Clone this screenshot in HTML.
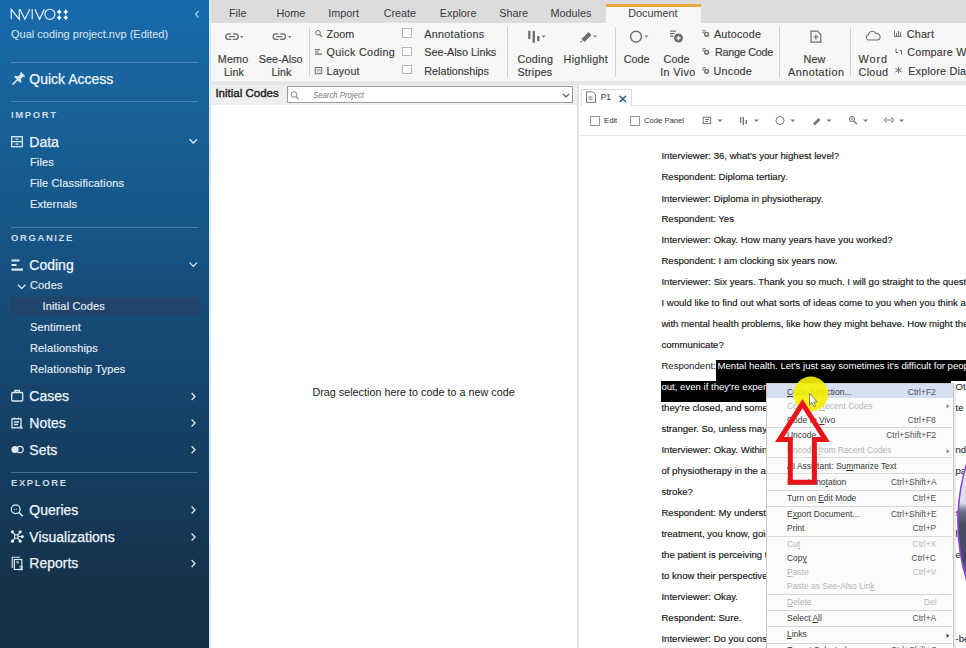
<!DOCTYPE html>
<html><head><meta charset="utf-8"><style>
html,body{margin:0;padding:0;width:966px;height:648px;overflow:hidden;background:#fff;position:relative}
.t{position:absolute;white-space:nowrap;line-height:1;font-family:"Liberation Sans", sans-serif}
u{text-decoration:underline;text-underline-offset:1px}
svg{overflow:visible}
</style></head><body>
<div style="position:absolute;left:0px;top:0px;width:209px;height:648px;background:linear-gradient(to bottom,#176aab 0px,#1867a4 45px,#165c90 165px,#174a75 325px,#143b5c 485px,#152f45 625px,#142d42 648px)"></div>
<div style="position:absolute;left:208.5px;top:0px;width:2px;height:648px;background:#d9ebfa"></div>
<svg style="position:absolute;left:0;top:0" width="209" height="60" viewBox="0 0 209 60">
<g fill="none" stroke="#eef5fb" stroke-width="1.15" stroke-linejoin="miter">
<path d="M11.2 19.3 V9.3 L19.3 19.3 V9.3"/>
<path d="M19.9 9.3 L24.9 19.3 L29.9 9.3"/>
<path d="M32.2 9.3 V19.3"/>
<path d="M34.9 9.3 L39.6 19.3 L44.3 9.3"/>
<ellipse cx="49.9" cy="14.3" rx="5.0" ry="5.1"/>
</g>
<g fill="#f4f8fc"><path d="M59.2 8.9 Q60.08 10.79 61.7 11.8 Q60.08 12.82 59.2 14.700000000000001 Q58.33 12.82 56.7 11.8 Q58.33 10.79 59.2 8.9 Z"/><path d="M65.8 8.9 Q66.67 10.79 68.3 11.8 Q66.67 12.82 65.8 14.700000000000001 Q64.92 12.82 63.3 11.8 Q64.92 10.79 65.8 8.9 Z"/><path d="M59.2 14.700000000000001 Q60.08 16.59 61.7 17.6 Q60.08 18.62 59.2 20.5 Q58.33 18.62 56.7 17.6 Q58.33 16.59 59.2 14.700000000000001 Z"/><path d="M65.8 14.700000000000001 Q66.67 16.59 68.3 17.6 Q66.67 18.62 65.8 20.5 Q64.92 18.62 63.3 17.6 Q64.92 16.59 65.8 14.700000000000001 Z"/></g>
<path d="M198.6 11 L195.6 14.3 L198.6 17.6" fill="none" stroke="#9ccff2" stroke-width="1.3"/>
</svg>
<div class="t" style="left:11.00px;top:28.69px;font-size:11px;color:#dbe8f3;font-weight:400;font-style:normal;">Qual coding project.nvp (Edited)</div>
<div style="position:absolute;left:11px;top:62px;width:187px;height:1px;background:rgba(160,200,235,0.35)"></div>
<div style="position:absolute;left:11px;top:101px;width:187px;height:1px;background:rgba(160,200,235,0.35)"></div>
<div style="position:absolute;left:11px;top:227px;width:187px;height:1px;background:rgba(160,200,235,0.35)"></div>
<div style="position:absolute;left:11px;top:472px;width:187px;height:1px;background:rgba(160,200,235,0.35)"></div>
<div class="t" style="left:11.00px;top:109.96px;font-size:9.5px;color:#cfdcea;font-weight:700;font-style:normal;letter-spacing:1.6px;">IMPORT</div>
<div class="t" style="left:11.00px;top:232.96px;font-size:9.5px;color:#cfdcea;font-weight:700;font-style:normal;letter-spacing:1.6px;">ORGANIZE</div>
<div class="t" style="left:11.00px;top:478.16px;font-size:9.5px;color:#cfdcea;font-weight:700;font-style:normal;letter-spacing:1.6px;">EXPLORE</div>
<div class="t" style="left:29.30px;top:72.15px;font-size:14px;color:#eef4fa;font-weight:400;font-style:normal;-webkit-text-stroke:0.25px #eef4fa;">Quick Access</div>
<div class="t" style="left:29.30px;top:134.65px;font-size:14px;color:#eef4fa;font-weight:400;font-style:normal;-webkit-text-stroke:0.25px #eef4fa;">Data</div>
<div class="t" style="left:29.30px;top:258.15px;font-size:14px;color:#eef4fa;font-weight:400;font-style:normal;-webkit-text-stroke:0.25px #eef4fa;">Coding</div>
<div class="t" style="left:29.30px;top:389.15px;font-size:14px;color:#eef4fa;font-weight:400;font-style:normal;-webkit-text-stroke:0.25px #eef4fa;">Cases</div>
<div class="t" style="left:29.30px;top:415.65px;font-size:14px;color:#eef4fa;font-weight:400;font-style:normal;-webkit-text-stroke:0.25px #eef4fa;">Notes</div>
<div class="t" style="left:29.30px;top:442.55px;font-size:14px;color:#eef4fa;font-weight:400;font-style:normal;-webkit-text-stroke:0.25px #eef4fa;">Sets</div>
<div class="t" style="left:29.30px;top:502.95px;font-size:14px;color:#eef4fa;font-weight:400;font-style:normal;-webkit-text-stroke:0.25px #eef4fa;">Queries</div>
<div class="t" style="left:29.30px;top:529.95px;font-size:14px;color:#eef4fa;font-weight:400;font-style:normal;-webkit-text-stroke:0.25px #eef4fa;">Visualizations</div>
<div class="t" style="left:29.30px;top:556.15px;font-size:14px;color:#eef4fa;font-weight:400;font-style:normal;-webkit-text-stroke:0.25px #eef4fa;">Reports</div>
<div style="position:absolute;left:10px;top:297px;width:190px;height:19px;background:#21446b"></div>
<div class="t" style="left:30.00px;top:156.89px;font-size:11px;color:#e6eef6;font-weight:400;font-style:normal;letter-spacing:0.15px;-webkit-text-stroke:0.15px #e6eef6;">Files</div>
<div class="t" style="left:30.00px;top:178.19px;font-size:11px;color:#e6eef6;font-weight:400;font-style:normal;letter-spacing:0.15px;-webkit-text-stroke:0.15px #e6eef6;">File Classifications</div>
<div class="t" style="left:30.00px;top:198.99px;font-size:11px;color:#e6eef6;font-weight:400;font-style:normal;letter-spacing:0.15px;-webkit-text-stroke:0.15px #e6eef6;">Externals</div>
<div class="t" style="left:30.00px;top:280.39px;font-size:11px;color:#e6eef6;font-weight:400;font-style:normal;letter-spacing:0.15px;-webkit-text-stroke:0.15px #e6eef6;">Codes</div>
<div class="t" style="left:42.50px;top:301.19px;font-size:11px;color:#e6eef6;font-weight:400;font-style:normal;letter-spacing:0.15px;-webkit-text-stroke:0.15px #e6eef6;">Initial Codes</div>
<div class="t" style="left:30.00px;top:322.49px;font-size:11px;color:#e6eef6;font-weight:400;font-style:normal;letter-spacing:0.15px;-webkit-text-stroke:0.15px #e6eef6;">Sentiment</div>
<div class="t" style="left:30.00px;top:343.49px;font-size:11px;color:#e6eef6;font-weight:400;font-style:normal;letter-spacing:0.15px;-webkit-text-stroke:0.15px #e6eef6;">Relationships</div>
<div class="t" style="left:30.00px;top:364.49px;font-size:11px;color:#e6eef6;font-weight:400;font-style:normal;letter-spacing:0.15px;-webkit-text-stroke:0.15px #e6eef6;">Relationship Types</div>
<svg style="position:absolute;left:0;top:0" width="209" height="648" viewBox="0 0 209 648">
<g fill="none" stroke="#dce8f3" stroke-width="1.3">
<!-- data icon -->
<rect x="11.7" y="136.7" width="10.6" height="10" />
<path d="M11.7 141.7 H22.3 M15.5 139.2 h3 M15.5 144.2 h3"/>
<!-- chevrons down -->
<path d="M189.6 139.2 L193.3 143 L197 139.2" />
<path d="M189.6 262.6 L193.3 266.4 L197 262.6" />
<path d="M18 284.8 L21.7 288.6 L25.4 284.8" />
<!-- chevrons right -->
<path d="M191.6 393 L195 396.5 L191.6 400" />
<path d="M191.6 419.5 L195 423 L191.6 426.5" />
<path d="M191.6 446.3 L195 449.8 L191.6 453.3" />
<path d="M191.6 506.5 L195 510 L191.6 513.5" />
<path d="M191.6 533.5 L195 537 L191.6 540.5" />
<path d="M191.6 560 L195 563.5 L191.6 567" />
<!-- cases -->
<rect x="11.7" y="392.5" width="11" height="8.5" rx="1"/>
<path d="M15 392.5 v-2 h4.4 v2"/>
<!-- notes -->
<rect x="12" y="418.8" width="9" height="9"/>
<path d="M14 422 h5 M14 424.5 h4 M14.5 417.5 v2 M18.5 417.5 v2 M20 426 l2.5 2.5"/>
<!-- queries -->
<circle cx="15.7" cy="509.3" r="4.4"/>
<path d="M18.9 512.5 L22.7 516.2" stroke-width="1.6"/>
<path d="M13.9 509.3 h3.6" stroke-width="1" stroke-dasharray="1 0.8"/>
<!-- reports -->
<path d="M12.2 568 V557.2 H20" stroke-width="1.1"/>
<rect x="14.3" y="559.5" width="7.5" height="10" stroke-width="1.2"/>
<circle cx="17.6" cy="562.3" r="0.9" stroke-width="0.9"/>
<path d="M19.5 566.3 h3.5 M19.5 568 h3.5 M19.5 569.7 h3.5" stroke-width="0.9"/>
</g>
<g fill="#dce8f3">
<!-- coding icon bars -->
<rect x="11.5" y="259.5" width="8" height="2"/>
<rect x="11.5" y="264" width="5" height="2"/>
<rect x="11.5" y="268.5" width="11.5" height="2.2"/>
<!-- pin -->
<g transform="translate(18.3,78.8) rotate(45)"><path d="M-2.9 -6.8 h5.8 v1.7 h-1.1 v3.3 l2.6 1.9 v1.4 h-8.8 v-1.4 l2.6 -1.9 v-3.3 h-1.1 z"/><path d="M0 1 v7.2" stroke="#dce8f3" stroke-width="1.5"/></g>
<!-- sets -->
<circle cx="15" cy="449.5" r="3.6"/>
<circle cx="20" cy="449.5" r="3.2" fill="none" stroke="#dce8f3" stroke-width="1.2"/>
<!-- visualizations -->
<circle cx="12.4" cy="531.8" r="1.6"/><circle cx="20.2" cy="531.8" r="1.6"/><circle cx="22.3" cy="536.6" r="1.6"/>
<circle cx="12.4" cy="541.2" r="1.6"/><circle cx="20.2" cy="541.2" r="1.6"/>
<path d="M12.4 531.8 L20.2 541.2 M20.2 531.8 L12.4 541.2 M16.3 536.5 H22.3" stroke="#dce8f3" stroke-width="1.2"/>
<rect x="14.6" y="534.8" width="3.4" height="3.4" fill="#153e60" stroke="#dce8f3" stroke-width="1.1"/>
</g>
</svg>
<div style="position:absolute;left:210.5px;top:0px;width:756px;height:23px;background:#dcdcde"></div>
<div style="position:absolute;left:210.5px;top:23px;width:756px;height:58px;background:#f7f7f7"></div>
<div style="position:absolute;left:210.5px;top:81px;width:756px;height:3.5px;background:#e7e7e7"></div>
<div style="position:absolute;left:606px;top:4px;width:95px;height:19px;background:#f7f7f7"></div>
<div style="position:absolute;left:606px;top:4px;width:95px;height:2.5px;background:#eaa73a"></div>
<div class="t" style="left:229.00px;top:7.86px;font-size:10.8px;color:#3a3a3a;font-weight:400;font-style:normal;">File</div>
<div class="t" style="left:276.50px;top:7.86px;font-size:10.8px;color:#3a3a3a;font-weight:400;font-style:normal;">Home</div>
<div class="t" style="left:328.30px;top:7.86px;font-size:10.8px;color:#3a3a3a;font-weight:400;font-style:normal;">Import</div>
<div class="t" style="left:383.70px;top:7.86px;font-size:10.8px;color:#3a3a3a;font-weight:400;font-style:normal;">Create</div>
<div class="t" style="left:439.80px;top:7.86px;font-size:10.8px;color:#3a3a3a;font-weight:400;font-style:normal;">Explore</div>
<div class="t" style="left:499.30px;top:7.86px;font-size:10.8px;color:#3a3a3a;font-weight:400;font-style:normal;">Share</div>
<div class="t" style="left:550.50px;top:7.86px;font-size:10.8px;color:#3a3a3a;font-weight:400;font-style:normal;">Modules</div>
<div class="t" style="left:628.30px;top:7.86px;font-size:10.8px;color:#3a3a3a;font-weight:400;font-style:normal;">Document</div>
<div style="position:absolute;left:309.2px;top:27px;width:1px;height:50px;background:#cfcfcf"></div>
<div style="position:absolute;left:507.2px;top:27px;width:1px;height:50px;background:#cfcfcf"></div>
<div style="position:absolute;left:615px;top:27px;width:1px;height:50px;background:#cfcfcf"></div>
<div style="position:absolute;left:779.2px;top:27px;width:1px;height:50px;background:#cfcfcf"></div>
<div style="position:absolute;left:850.3px;top:27px;width:1px;height:50px;background:#cfcfcf"></div>
<div class="t" style="left:217.80px;top:54.46px;font-size:10.8px;color:#3a3a3a;font-weight:400;font-style:normal;letter-spacing:0.15px;-webkit-text-stroke:0.15px #3a3a3a;">Memo</div>
<div class="t" style="left:224.00px;top:67.36px;font-size:10.8px;color:#3a3a3a;font-weight:400;font-style:normal;letter-spacing:0px;-webkit-text-stroke:0.15px #3a3a3a;">Link</div>
<div class="t" style="left:258.80px;top:54.46px;font-size:10.8px;color:#3a3a3a;font-weight:400;font-style:normal;letter-spacing:0px;-webkit-text-stroke:0.15px #3a3a3a;">See-Also</div>
<div class="t" style="left:271.50px;top:67.36px;font-size:10.8px;color:#3a3a3a;font-weight:400;font-style:normal;letter-spacing:0px;-webkit-text-stroke:0.15px #3a3a3a;">Link</div>
<div class="t" style="left:517.40px;top:54.16px;font-size:10.8px;color:#3a3a3a;font-weight:400;font-style:normal;letter-spacing:0.3px;-webkit-text-stroke:0.15px #3a3a3a;">Coding</div>
<div class="t" style="left:517.40px;top:67.16px;font-size:10.8px;color:#3a3a3a;font-weight:400;font-style:normal;letter-spacing:0.2px;-webkit-text-stroke:0.15px #3a3a3a;">Stripes</div>
<div class="t" style="left:563.60px;top:54.16px;font-size:10.8px;color:#3a3a3a;font-weight:400;font-style:normal;letter-spacing:0.28px;-webkit-text-stroke:0.15px #3a3a3a;">Highlight</div>
<div class="t" style="left:623.80px;top:54.16px;font-size:10.8px;color:#3a3a3a;font-weight:400;font-style:normal;letter-spacing:0px;-webkit-text-stroke:0.15px #3a3a3a;">Code</div>
<div class="t" style="left:663.60px;top:54.16px;font-size:10.8px;color:#3a3a3a;font-weight:400;font-style:normal;letter-spacing:0px;-webkit-text-stroke:0.15px #3a3a3a;">Code</div>
<div class="t" style="left:660.20px;top:67.16px;font-size:10.8px;color:#3a3a3a;font-weight:400;font-style:normal;letter-spacing:0.38px;-webkit-text-stroke:0.15px #3a3a3a;">In Vivo</div>
<div class="t" style="left:803.60px;top:54.16px;font-size:10.8px;color:#3a3a3a;font-weight:400;font-style:normal;letter-spacing:0px;-webkit-text-stroke:0.15px #3a3a3a;">New</div>
<div class="t" style="left:788.00px;top:67.16px;font-size:10.8px;color:#3a3a3a;font-weight:400;font-style:normal;letter-spacing:0.48px;-webkit-text-stroke:0.15px #3a3a3a;">Annotation</div>
<div class="t" style="left:858.60px;top:54.16px;font-size:10.8px;color:#3a3a3a;font-weight:400;font-style:normal;letter-spacing:0.9px;-webkit-text-stroke:0.15px #3a3a3a;">Word</div>
<div class="t" style="left:858.50px;top:67.16px;font-size:10.8px;color:#3a3a3a;font-weight:400;font-style:normal;letter-spacing:0.33px;-webkit-text-stroke:0.15px #3a3a3a;">Cloud</div>
<div class="t" style="left:326.60px;top:28.86px;font-size:10.8px;color:#3a3a3a;font-weight:400;font-style:normal;letter-spacing:0px;-webkit-text-stroke:0.15px #3a3a3a;">Zoom</div>
<div class="t" style="left:326.60px;top:47.16px;font-size:10.8px;color:#3a3a3a;font-weight:400;font-style:normal;letter-spacing:0.3px;-webkit-text-stroke:0.15px #3a3a3a;">Quick Coding</div>
<div class="t" style="left:326.60px;top:66.06px;font-size:10.8px;color:#3a3a3a;font-weight:400;font-style:normal;letter-spacing:0.1px;-webkit-text-stroke:0.15px #3a3a3a;">Layout</div>
<div class="t" style="left:424.20px;top:28.96px;font-size:10.8px;color:#3a3a3a;font-weight:400;font-style:normal;letter-spacing:0.3px;-webkit-text-stroke:0.15px #3a3a3a;">Annotations</div>
<div class="t" style="left:424.20px;top:46.96px;font-size:10.8px;color:#3a3a3a;font-weight:400;font-style:normal;letter-spacing:0px;-webkit-text-stroke:0.15px #3a3a3a;">See-Also Links</div>
<div class="t" style="left:424.20px;top:65.96px;font-size:10.8px;color:#3a3a3a;font-weight:400;font-style:normal;letter-spacing:0px;-webkit-text-stroke:0.15px #3a3a3a;">Relationships</div>
<div class="t" style="left:713.90px;top:28.86px;font-size:10.8px;color:#3a3a3a;font-weight:400;font-style:normal;letter-spacing:0.2px;-webkit-text-stroke:0.15px #3a3a3a;">Autocode</div>
<div class="t" style="left:714.90px;top:47.06px;font-size:10.8px;color:#3a3a3a;font-weight:400;font-style:normal;letter-spacing:-0.25px;-webkit-text-stroke:0.15px #3a3a3a;">Range Code</div>
<div class="t" style="left:713.60px;top:66.36px;font-size:10.8px;color:#3a3a3a;font-weight:400;font-style:normal;letter-spacing:0.2px;-webkit-text-stroke:0.15px #3a3a3a;">Uncode</div>
<div class="t" style="left:906.70px;top:29.06px;font-size:10.8px;color:#3a3a3a;font-weight:400;font-style:normal;letter-spacing:0.2px;-webkit-text-stroke:0.15px #3a3a3a;">Chart</div>
<div class="t" style="left:907.20px;top:47.06px;font-size:10.8px;color:#3a3a3a;font-weight:400;font-style:normal;letter-spacing:0.2px;-webkit-text-stroke:0.15px #3a3a3a;">Compare With</div>
<div class="t" style="left:908.20px;top:66.06px;font-size:10.8px;color:#3a3a3a;font-weight:400;font-style:normal;letter-spacing:0.2px;-webkit-text-stroke:0.15px #3a3a3a;">Explore Diagram</div>
<div style="position:absolute;left:402.2px;top:28.4px;width:9.4px;height:9.2px;background:#fff;border:1px solid #b5b5b5;box-sizing:border-box"></div>
<div style="position:absolute;left:402.2px;top:46.7px;width:9.4px;height:9.2px;background:#fff;border:1px solid #b5b5b5;box-sizing:border-box"></div>
<div style="position:absolute;left:402.2px;top:65.3px;width:9.4px;height:9.2px;background:#fff;border:1px solid #b5b5b5;box-sizing:border-box"></div>
<svg style="position:absolute;left:0;top:0" width="966" height="90" viewBox="0 0 966 90">
<g fill="none" stroke="#6e6e6e" stroke-width="1.3">
<!-- link icons -->
<path d="M231.2 33.9 h-2.6 a2.75 2.75 0 0 0 0 5.5 h2.6 M232.8 33.9 h2.6 a2.75 2.75 0 0 1 0 5.5 h-2.6 M229 36.65 h6"/>
<path d="M278.5 33.9 h-2.6 a2.75 2.75 0 0 0 0 5.5 h2.6 M280.1 33.9 h2.6 a2.75 2.75 0 0 1 0 5.5 h-2.6 M276.3 36.65 h6"/>
<!-- zoom -->
<circle cx="318" cy="32.8" r="2.3" stroke-width="1"/><path d="M319.7 34.5 L322 36.8" stroke-width="1.2"/>
<!-- layout -->
<rect x="315.2" y="67.5" width="6.5" height="6.2" stroke-width="1"/>
<path d="M316.5 70 h4 M317 72 h1 M319.5 72 h1" stroke-width="0.9"/>
<!-- code circle -->
<circle cx="636" cy="36.6" r="5.4" stroke-width="1.4"/>
<!-- new annotation -->
<path d="M811 31.2 h6.5 l3.3 3.3 v7.6 h-9.8 z" stroke-width="1.2"/>
<path d="M815.9 34.5 v5 M813.4 37 h5" stroke-width="1.2"/>
<!-- word cloud -->
<path d="M868 40 a3 3 0 0 1 0.5 -5.5 a4 4 0 0 1 7.5 -1 a3 3 0 0 1 1.5 6.5 z" stroke-width="1.1"/>
<!-- autocode etc -->
<g stroke-width="1">
<path d="M702.3 30.8 h3.5 M702.3 32.8 h2.3"/><circle cx="706.6" cy="34.3" r="1.9" stroke-width="1.4"/>
<path d="M702.3 48.8 h3.5 M702.3 50.8 h2.3"/><circle cx="706.6" cy="52.3" r="1.9" stroke-width="1.4"/>
<path d="M702.3 67.8 h3.5 M702.3 69.8 h2.3"/><circle cx="706.6" cy="71.3" r="1.9" stroke-width="1.4"/>
</g>
<!-- chart -->
<path d="M894.5 30.5 v6 h7" stroke-width="1"/>
<path d="M896.5 36 v-3 M898.5 36 v-5 M900.5 36 v-4" stroke-width="1"/>
<!-- compare -->
<path d="M896 48.5 v4 h2 M901.5 54.5 v-4 h-2" stroke-width="1"/>
<!-- explore -->
<path d="M898.5 67 v6.5 M895.5 68.5 l6 3.5 M895.5 72 l6 -3.5" stroke-width="1"/>
</g>
<g fill="#6e6e6e">
<!-- dropdown arrows -->
<path d="M240 36 h3.5 l-1.75 2z"/><path d="M288 36 h3.5 l-1.75 2z"/>
<path d="M541.5 35.5 h4 l-2 2z"/><path d="M593 35.5 h4 l-2 2z"/><path d="M644.5 35.5 h4 l-2 2z"/>
<!-- coding stripes -->
<rect x="528.2" y="30.8" width="2.2" height="8.2"/><rect x="532.6" y="30.8" width="2.3" height="12"/><rect x="537" y="36" width="2.5" height="5"/>
<!-- highlight pen -->
<path d="M581.5 39 L588.5 32 L591.5 35 L584.5 42 Z"/><path d="M579.5 42.5 l2 -2 l1 1z"/>
<!-- quick coding -->
<rect x="315" y="49" width="5" height="1.2"/><rect x="315" y="51.3" width="3.5" height="1.2"/><rect x="315" y="53.5" width="7" height="1.3"/>
<!-- code in vivo -->
<rect x="670" y="30.5" width="6" height="1.2"/><rect x="670" y="33" width="4.5" height="1.2"/><rect x="670" y="35.5" width="3.5" height="1.2"/>
<circle cx="678.5" cy="38" r="4.5"/>
</g>
<path d="M678.5 35.2 Q678.9 37.6 681.3 38 Q678.9 38.4 678.5 40.8 Q678.1 38.4 675.7 38 Q678.1 37.6 678.5 35.2 Z" fill="#f6f6f6"/>
</svg>
<div style="position:absolute;left:210.5px;top:85px;width:366px;height:20px;background:#efefef"></div>
<div style="position:absolute;left:210.5px;top:105px;width:366px;height:543px;background:#ffffff"></div>
<div style="position:absolute;left:576.5px;top:85px;width:2.5px;height:563px;background:#e3e3e3"></div>
<div class="t" style="left:215.40px;top:87.57px;font-size:11.5px;color:#1e1e1e;font-weight:400;font-style:normal;-webkit-text-stroke:0.4px #1e1e1e;">Initial Codes</div>
<div style="position:absolute;left:287px;top:86px;width:286px;height:17px;background:#fff;border:1px solid #9c9c9c;box-sizing:border-box"></div>
<div class="t" style="left:312.60px;top:90.67px;font-size:8.9px;color:#7a7a7a;font-weight:400;font-style:italic;transform:scaleX(0.875);transform-origin:0 0;">Search Project</div>
<svg style="position:absolute;left:0;top:0" width="600" height="110" viewBox="0 0 600 110">
<circle cx="294" cy="94.5" r="2.8" fill="none" stroke="#8a8a8a" stroke-width="1"/>
<path d="M296 96.5 L298.5 99" stroke="#8a8a8a" stroke-width="1.1"/>
<path d="M563 94 L566 97 L569 94" fill="none" stroke="#555" stroke-width="1.2"/>
</svg>
<div class="t" style="left:312.40px;top:387.26px;font-size:10.8px;color:#222;font-weight:400;font-style:normal;">Drag selection here to code to a new code</div>
<div style="position:absolute;left:579px;top:85px;width:387px;height:563px;background:#ffffff"></div>
<div style="position:absolute;left:579px;top:85px;width:387px;height:20px;background:#ffffff"></div>
<div style="position:absolute;left:580.8px;top:88.5px;width:51px;height:17px;background:#fff;border:1px solid #dcdcdc;border-bottom:none;box-sizing:border-box"></div>
<div style="position:absolute;left:631.5px;top:105px;width:335px;height:1px;background:#e2e2e2"></div>
<div style="position:absolute;left:581px;top:135px;width:385px;height:1px;background:#e6e6e6"></div>
<div class="t" style="left:600.80px;top:92.62px;font-size:8.6px;color:#333;font-weight:400;font-style:normal;letter-spacing:-0.3px;">P1</div>
<div style="position:absolute;left:590.3px;top:116.4px;width:9.5px;height:9.5px;background:#fff;border:1px solid #9a9a9a;box-sizing:border-box"></div>
<div style="position:absolute;left:630.1px;top:116.4px;width:9.6px;height:9.5px;background:#fff;border:1px solid #9a9a9a;box-sizing:border-box"></div>
<div class="t" style="left:604.00px;top:117.08px;font-size:7.7px;color:#333;font-weight:400;font-style:normal;">Edit</div>
<div class="t" style="left:643.90px;top:117.08px;font-size:7.7px;color:#333;font-weight:400;font-style:normal;">Code Panel</div>
<svg style="position:absolute;left:0;top:0" width="966" height="140" viewBox="0 0 966 140">
<g fill="none" stroke="#777" stroke-width="1">
<path d="M586.5 91.8 h6 l3 3 v7.5 h-9 z"/>
<path d="M588.5 97 h4 M588.5 99.2 h4"/>
</g>
<path d="M619.5 95.8 L626 102 M626 95.8 L619.5 102" stroke="#2c5f95" stroke-width="1.5"/>
<g fill="none" stroke="#777" stroke-width="1">
<rect x="703.2" y="117.3" width="7.5" height="6.3"/>
<path d="M705 119.5 h4 M705 121.5 h3"/>
<circle cx="780" cy="120.5" r="4"/>
<circle cx="852" cy="119" r="2.6"/><path d="M853.8 121 L857 124.3" stroke-width="1.3"/>
<path d="M852 117.6 v2.8 M850.6 119 h2.8" stroke-width="0.8"/>
<path d="M887 118 h-0.5 a2 2 0 0 0 0 4 h0.5 M891 118 h0.5 a2 2 0 0 1 0 4 h-0.5 M886 120 h6"/>
</g>
<g fill="#777">
<rect x="740" y="117" width="1.3" height="6"/><rect x="742.6" y="117" width="1.4" height="8"/><rect x="745.5" y="120" width="1.5" height="4"/>
<path d="M813 123.5 L818.5 118 L820.5 120 L815 125.5 Z"/>
<path d="M717.5 119.5 h5 l-2.5 2.5z"/><path d="M754 119.5 h5 l-2.5 2.5z"/><path d="M790.3 119.5 h5 l-2.5 2.5z"/>
<path d="M826.6 119.5 h5 l-2.5 2.5z"/><path d="M863 119.5 h5 l-2.5 2.5z"/><path d="M899 119.5 h5 l-2.5 2.5z"/>
</g>
</svg>
<div class="t" style="left:661.40px;top:151.17px;font-size:9.6px;color:#161616;font-weight:400;font-style:normal;-webkit-text-stroke:0.15px #161616;">Interviewer: 36, what&#39;s your highest level?</div>
<div class="t" style="left:661.40px;top:172.27px;font-size:9.6px;color:#161616;font-weight:400;font-style:normal;-webkit-text-stroke:0.15px #161616;">Respondent: Diploma tertiary.</div>
<div class="t" style="left:661.40px;top:193.57px;font-size:9.6px;color:#161616;font-weight:400;font-style:normal;-webkit-text-stroke:0.15px #161616;">Interviewer: Diploma in physiotherapy.</div>
<div class="t" style="left:661.40px;top:213.87px;font-size:9.6px;color:#161616;font-weight:400;font-style:normal;-webkit-text-stroke:0.15px #161616;">Respondent: Yes</div>
<div class="t" style="left:661.40px;top:234.87px;font-size:9.6px;color:#161616;font-weight:400;font-style:normal;-webkit-text-stroke:0.15px #161616;">Interviewer: Okay. How many years have you worked?</div>
<div class="t" style="left:661.40px;top:255.87px;font-size:9.6px;color:#161616;font-weight:400;font-style:normal;-webkit-text-stroke:0.15px #161616;">Respondent: I am clocking six years now.</div>
<div class="t" style="left:661.40px;top:276.87px;font-size:9.6px;color:#161616;font-weight:400;font-style:normal;-webkit-text-stroke:0.15px #161616;">Interviewer: Six years. Thank you so much. I will go straight to the questions.</div>
<div class="t" style="left:661.40px;top:297.87px;font-size:9.6px;color:#161616;font-weight:400;font-style:normal;-webkit-text-stroke:0.15px #161616;">I would like to find out what sorts of ideas come to you when you think about</div>
<div class="t" style="left:661.40px;top:318.87px;font-size:9.6px;color:#161616;font-weight:400;font-style:normal;-webkit-text-stroke:0.15px #161616;">with mental health problems, like how they might behave. How might they</div>
<div class="t" style="left:661.40px;top:339.87px;font-size:9.6px;color:#161616;font-weight:400;font-style:normal;-webkit-text-stroke:0.15px #161616;">communicate?</div>
<div class="t" style="left:661.40px;top:403.37px;font-size:9.6px;color:#161616;font-weight:400;font-style:normal;-webkit-text-stroke:0.15px #161616;">they&#39;re closed, and sometimes they don&#39;t want to talk to the</div>
<div class="t" style="left:661.40px;top:424.27px;font-size:9.6px;color:#161616;font-weight:400;font-style:normal;-webkit-text-stroke:0.15px #161616;">stranger. So, unless maybe</div>
<div class="t" style="left:661.40px;top:445.17px;font-size:9.6px;color:#161616;font-weight:400;font-style:normal;-webkit-text-stroke:0.15px #161616;">Interviewer: Okay. Within your practice and</div>
<div class="t" style="left:661.40px;top:465.87px;font-size:9.6px;color:#161616;font-weight:400;font-style:normal;-webkit-text-stroke:0.15px #161616;">of physiotherapy in the area of patients with</div>
<div class="t" style="left:661.40px;top:486.67px;font-size:9.6px;color:#161616;font-weight:400;font-style:normal;-webkit-text-stroke:0.15px #161616;">stroke?</div>
<div class="t" style="left:661.40px;top:508.17px;font-size:9.6px;color:#161616;font-weight:400;font-style:normal;-webkit-text-stroke:0.15px #161616;">Respondent: My understanding is</div>
<div class="t" style="left:661.40px;top:528.87px;font-size:9.6px;color:#161616;font-weight:400;font-style:normal;-webkit-text-stroke:0.15px #161616;">treatment, you know, going on with the</div>
<div class="t" style="left:661.40px;top:549.87px;font-size:9.6px;color:#161616;font-weight:400;font-style:normal;-webkit-text-stroke:0.15px #161616;">the patient is perceiving the treatment, the</div>
<div class="t" style="left:661.40px;top:570.87px;font-size:9.6px;color:#161616;font-weight:400;font-style:normal;-webkit-text-stroke:0.15px #161616;">to know their perspective of the treatment.</div>
<div class="t" style="left:661.40px;top:591.87px;font-size:9.6px;color:#161616;font-weight:400;font-style:normal;-webkit-text-stroke:0.15px #161616;">Interviewer: Okay.</div>
<div class="t" style="left:661.40px;top:612.87px;font-size:9.6px;color:#161616;font-weight:400;font-style:normal;-webkit-text-stroke:0.15px #161616;">Respondent: Sure.</div>
<div class="t" style="left:661.40px;top:633.87px;font-size:9.6px;color:#161616;font-weight:400;font-style:normal;-webkit-text-stroke:0.15px #161616;">Interviewer: Do you consider that you have an obligation to be</div>
<div style="position:absolute;left:716.4px;top:360px;width:250px;height:21px;background:#000"></div>
<div style="position:absolute;left:661px;top:381px;width:290px;height:21px;background:#000"></div>
<div class="t" style="left:661.40px;top:360.87px;font-size:9.6px;color:#161616;font-weight:400;font-style:normal;">Respondent:</div>
<div class="t" style="left:717.50px;top:360.87px;font-size:9.6px;color:#fff;font-weight:400;font-style:normal;">Mental health. Let&#39;s just say sometimes it&#39;s difficult for people to</div>
<div class="t" style="left:661.40px;top:381.87px;font-size:9.6px;color:#fff;font-weight:400;font-style:normal;">out, even if they&#39;re experiencing something</div>
<div class="t" style="left:955.50px;top:381.87px;font-size:9.6px;color:#161616;font-weight:400;font-style:normal;">Oti</div>
<div class="t" style="left:955.50px;top:403.37px;font-size:9.6px;color:#161616;font-weight:400;font-style:normal;">te</div>
<div class="t" style="left:955.50px;top:445.17px;font-size:9.6px;color:#161616;font-weight:400;font-style:normal;">nd</div>
<div class="t" style="left:955.50px;top:465.87px;font-size:9.6px;color:#161616;font-weight:400;font-style:normal;">pa</div>
<div class="t" style="left:955.50px;top:508.17px;font-size:9.6px;color:#161616;font-weight:400;font-style:normal;">s</div>
<div class="t" style="left:955.50px;top:528.87px;font-size:9.6px;color:#161616;font-weight:400;font-style:normal;">h</div>
<div class="t" style="left:955.50px;top:549.87px;font-size:9.6px;color:#161616;font-weight:400;font-style:normal;">e.</div>
<div class="t" style="left:955.50px;top:633.87px;font-size:9.6px;color:#161616;font-weight:400;font-style:normal;">-be</div>
<svg style="position:absolute;left:0;top:0" width="966" height="648" viewBox="0 0 966 648">
<defs><linearGradient id="wc" gradientUnits="userSpaceOnUse" x1="0" y1="466" x2="0" y2="578">
<stop offset="0" stop-color="#eceaf4"/><stop offset="0.33" stop-color="#dcdae8"/><stop offset="0.40" stop-color="#707088"/>
<stop offset="0.52" stop-color="#4a4a5e"/><stop offset="0.85" stop-color="#484860"/><stop offset="0.93" stop-color="#6a5a90"/><stop offset="1" stop-color="#d0c8e8"/></linearGradient></defs>
<circle cx="1155.5" cy="522" r="197.6" fill="url(#wc)" stroke="#8646e6" stroke-width="1.6"/>
</svg>
<div style="position:absolute;left:766.6px;top:383.5px;width:189.4px;height:270px;background:rgba(0,0,0,0.08)"></div>
<div style="position:absolute;left:765.6px;top:382.5px;width:188.4px;height:270px;background:#fbfbfb;border:1px solid #c9c9c9;box-sizing:border-box"></div>
<div style="position:absolute;left:766.9px;top:384.2px;width:186px;height:14.2px;background:#d6e0f1"></div>
<div class="t" style="left:786.60px;top:387.98px;font-size:9.0px;color:#383838;font-weight:400;font-style:normal;transform:scaleX(0.94);transform-origin:0 0;"><u>C</u>ode Selection...</div>
<div class="t" style="right:29.80px;top:387.98px;font-size:9.0px;color:#505050;transform:scaleX(0.94);transform-origin:100% 0">Ctrl+F2</div>
<div class="t" style="left:786.60px;top:401.58px;font-size:9.0px;color:#b4b4b4;font-weight:400;font-style:normal;transform:scaleX(0.94);transform-origin:0 0;">Code to <u>R</u>ecent Codes</div>
<div class="t" style="left:786.60px;top:415.58px;font-size:9.0px;color:#383838;font-weight:400;font-style:normal;transform:scaleX(0.94);transform-origin:0 0;">Code In <u>V</u>ivo</div>
<div class="t" style="right:29.80px;top:415.58px;font-size:9.0px;color:#505050;transform:scaleX(0.94);transform-origin:100% 0">Ctrl+F8</div>
<div class="t" style="left:786.60px;top:431.18px;font-size:9.0px;color:#383838;font-weight:400;font-style:normal;transform:scaleX(0.94);transform-origin:0 0;"><u>U</u>ncode...</div>
<div class="t" style="right:29.80px;top:431.18px;font-size:9.0px;color:#505050;transform:scaleX(0.94);transform-origin:100% 0">Ctrl+Shift+F2</div>
<div class="t" style="left:786.60px;top:445.98px;font-size:9.0px;color:#b4b4b4;font-weight:400;font-style:normal;transform:scaleX(0.94);transform-origin:0 0;">Uncode <u>f</u>rom Recent Codes</div>
<div class="t" style="left:786.60px;top:462.18px;font-size:9.0px;color:#383838;font-weight:400;font-style:normal;transform:scaleX(0.94);transform-origin:0 0;">AI Assistant: Su<u>m</u>marize Text</div>
<div class="t" style="left:786.60px;top:478.08px;font-size:9.0px;color:#383838;font-weight:400;font-style:normal;transform:scaleX(0.94);transform-origin:0 0;">New Anno<u>t</u>ation</div>
<div class="t" style="right:29.80px;top:478.08px;font-size:9.0px;color:#505050;transform:scaleX(0.94);transform-origin:100% 0">Ctrl+Shift+A</div>
<div class="t" style="left:786.60px;top:494.28px;font-size:9.0px;color:#383838;font-weight:400;font-style:normal;transform:scaleX(0.94);transform-origin:0 0;">Turn on <u>E</u>dit Mode</div>
<div class="t" style="right:29.80px;top:494.28px;font-size:9.0px;color:#505050;transform:scaleX(0.94);transform-origin:100% 0">Ctrl+E</div>
<div class="t" style="left:786.60px;top:510.18px;font-size:9.0px;color:#383838;font-weight:400;font-style:normal;transform:scaleX(0.94);transform-origin:0 0;">E<u>x</u>port Document...</div>
<div class="t" style="right:29.80px;top:510.18px;font-size:9.0px;color:#505050;transform:scaleX(0.94);transform-origin:100% 0">Ctrl+Shift+E</div>
<div class="t" style="left:786.60px;top:524.28px;font-size:9.0px;color:#383838;font-weight:400;font-style:normal;transform:scaleX(0.94);transform-origin:0 0;">Print</div>
<div class="t" style="right:29.80px;top:524.28px;font-size:9.0px;color:#505050;transform:scaleX(0.94);transform-origin:100% 0">Ctrl+P</div>
<div class="t" style="left:786.60px;top:540.18px;font-size:9.0px;color:#b4b4b4;font-weight:400;font-style:normal;transform:scaleX(0.94);transform-origin:0 0;">Cu<u>t</u></div>
<div class="t" style="right:29.80px;top:540.18px;font-size:9.0px;color:#b8b8b8;transform:scaleX(0.94);transform-origin:100% 0">Ctrl+X</div>
<div class="t" style="left:786.60px;top:554.18px;font-size:9.0px;color:#383838;font-weight:400;font-style:normal;transform:scaleX(0.94);transform-origin:0 0;">Cop<u>y</u></div>
<div class="t" style="right:29.80px;top:554.18px;font-size:9.0px;color:#505050;transform:scaleX(0.94);transform-origin:100% 0">Ctrl+C</div>
<div class="t" style="left:786.60px;top:568.08px;font-size:9.0px;color:#b4b4b4;font-weight:400;font-style:normal;transform:scaleX(0.94);transform-origin:0 0;"><u>P</u>aste</div>
<div class="t" style="right:29.80px;top:568.08px;font-size:9.0px;color:#b8b8b8;transform:scaleX(0.94);transform-origin:100% 0">Ctrl+V</div>
<div class="t" style="left:786.60px;top:581.98px;font-size:9.0px;color:#b4b4b4;font-weight:400;font-style:normal;transform:scaleX(0.94);transform-origin:0 0;">Paste as See-Also Lin<u>k</u></div>
<div class="t" style="left:786.60px;top:597.58px;font-size:9.0px;color:#b4b4b4;font-weight:400;font-style:normal;transform:scaleX(0.94);transform-origin:0 0;"><u>D</u>elete</div>
<div class="t" style="right:29.80px;top:597.58px;font-size:9.0px;color:#b8b8b8;transform:scaleX(0.94);transform-origin:100% 0">Del</div>
<div class="t" style="left:786.60px;top:614.08px;font-size:9.0px;color:#383838;font-weight:400;font-style:normal;transform:scaleX(0.94);transform-origin:0 0;">Select <u>A</u>ll</div>
<div class="t" style="right:29.80px;top:614.08px;font-size:9.0px;color:#505050;transform:scaleX(0.94);transform-origin:100% 0">Ctrl+A</div>
<div class="t" style="left:786.60px;top:630.18px;font-size:9.0px;color:#383838;font-weight:400;font-style:normal;transform:scaleX(0.94);transform-origin:0 0;"><u>L</u>inks</div>
<div class="t" style="left:786.60px;top:645.58px;font-size:9.0px;color:#383838;font-weight:400;font-style:normal;transform:scaleX(0.94);transform-origin:0 0;">Export Selected...</div>
<div class="t" style="right:29.80px;top:645.58px;font-size:9.0px;color:#505050;transform:scaleX(0.94);transform-origin:100% 0">Ctrl+Shift+S</div>
<div style="position:absolute;left:767px;top:427.2px;width:185px;height:1px;background:#d9d9d9"></div>
<div style="position:absolute;left:767px;top:457.3px;width:185px;height:1px;background:#d9d9d9"></div>
<div style="position:absolute;left:767px;top:473.3px;width:185px;height:1px;background:#d9d9d9"></div>
<div style="position:absolute;left:767px;top:489.6px;width:185px;height:1px;background:#d9d9d9"></div>
<div style="position:absolute;left:767px;top:505.9px;width:185px;height:1px;background:#d9d9d9"></div>
<div style="position:absolute;left:767px;top:536.2px;width:185px;height:1px;background:#d9d9d9"></div>
<div style="position:absolute;left:767px;top:594.3px;width:185px;height:1px;background:#d9d9d9"></div>
<div style="position:absolute;left:767px;top:610px;width:185px;height:1px;background:#d9d9d9"></div>
<div style="position:absolute;left:767px;top:626px;width:185px;height:1px;background:#d9d9d9"></div>
<div style="position:absolute;left:767px;top:642.5px;width:185px;height:1px;background:#d9d9d9"></div>
<svg style="position:absolute;left:0;top:0" width="966" height="648" viewBox="0 0 966 648">
<path d="M946.5 404 L949.5 406.2 L946.5 408.4 Z" fill="#888"/>
<path d="M946.5 449 L949.5 451.2 L946.5 453.4 Z" fill="#888"/>
<path d="M946.5 633.5 L949.5 635.7 L946.5 637.9 Z" fill="#555"/>
</svg>
<svg style="position:absolute;left:0;top:0" width="966" height="648" viewBox="0 0 966 648">
<circle cx="810.8" cy="394" r="17.4" fill="#f5f000" fill-opacity="0.9"/>
<path d="M809.5 393.5 L809.5 405 L812 402.7 L814 406.8 L815.6 406 L813.7 402 L817 401.8 Z" fill="#fff" stroke="#555" stroke-width="0.7"/>
<path d="M802.5 403.6 L779.6 439.5 L790.3 439.5 L790.3 482.3 L814.4 482.3 L814.4 439.5 L825.4 439.5 Z" fill="none" stroke="#e8141c" stroke-width="5" stroke-linejoin="miter" stroke-miterlimit="10"/>
</svg>
</body></html>
